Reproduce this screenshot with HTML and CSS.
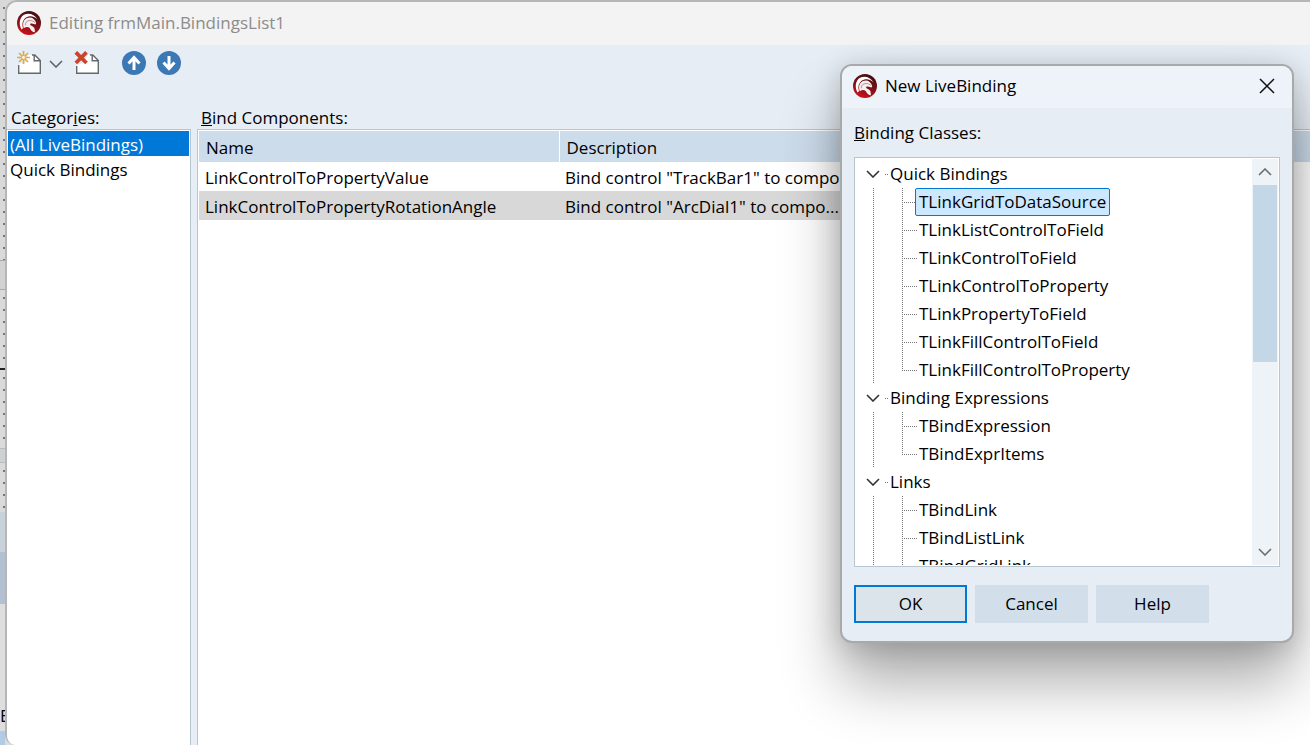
FILE: index.html
```html
<!DOCTYPE html>
<html lang="en">
<head>
    <meta charset="UTF-8">
    <meta name="viewport" content="width=device-width, initial-scale=1.0">
    <title>Editing frmMain.BindingsList1</title>
    <link rel="stylesheet" href="styles.css">
</head>
<body>
    <!--Shared logo-->
    <svg class="defs" width="0" height="0" aria-hidden="true">
        <defs>
            <linearGradient id="red" x1="0.8" y1="0" x2="0.4" y2="1">
                <stop offset="0" stop-color="#3a0c10"/>
                <stop offset="0.55" stop-color="#7d1218"/>
                <stop offset="1" stop-color="#cf1118"/>
            </linearGradient>
            <symbol id="helmet" viewBox="0 0 24 24">
                <circle cx="12" cy="12" r="12" fill="url(#red)"/>
                <path fill="#fff" d="M4.500 18.500C1.800 13.500 2 7 7 3.800C11.500 1.300 17.500 3 20.500 8.500C17 5 12.800 4.600 9.500 6.200C5.800 8.200 4.600 12.500 6 17.300Z"/>
                <path fill="#f4f0f0" d="M6.800 17.300C5.200 12.800 6.300 8.800 10 7C13.800 5.400 18 7.200 19.200 12L18.500 13.500L14.800 12.600C13.600 12.500 13 13 13.200 13.700C13.800 14.900 16 14.800 17.200 16.700C18 18.200 17.600 19.800 18 21.300C15.500 21 13.800 19.300 12.900 17.200C11 15.600 9 15.800 6.800 17.300Z"/>
                <path fill="none" stroke="#a86a6d" stroke-width="0.7" d="M8.300 14.300C8.200 11.200 10 9.500 13 9.500C15 9.500 16.800 10.200 18 11.600"/>
            </symbol>
        </defs>
    </svg>

    <div class="screen">
        <!--Designer showing behind the window-->
        <div class="designer" aria-hidden="true">
            <div class="strip dots top"></div>
            <div class="strip splitter"></div>
            <div class="strip dots mid"></div>
            <div class="strip line"></div>
            <div class="strip dots mid"></div>
            <div class="strip bar"></div>
            <div class="strip dots low"></div>
            <div class="strip tab"></div>
            <div class="strip tab-active"></div>
            <div class="strip tree-edge">E</div>
            <div class="strip status"></div>
        </div>

        <main class="window">
            <header class="titlebar">
                <svg class="logo"><use href="#helmet"/></svg>
                <h1>Editing frmMain.BindingsList1</h1>
            </header>

            <div class="toolbar">
                <button class="tool" aria-label="New binding">
                    <svg width="25" height="24" viewBox="0 0 25 24">
                        <path d="M2 13V22.300H23.300V10L17 4H11L9 11Z" fill="#fff"/>
                        <path d="M1.700 14V22.300H23.300V9.500L17.800 4H15M17.200 4.500V9.800H23" fill="none" stroke="#66696c" stroke-width="1.400"/>
                        <path d="M6.500 0V13M0 6.500H13M2 2L11 11M11 2L2 11" stroke="#e6a93f" stroke-width="1.700"/>
                        <circle cx="6.500" cy="6.500" r="1.400" fill="#fff"/>
                    </svg>
                </button>
                <button class="tool arrow" aria-label="More">
                    <svg width="14" height="10" viewBox="0 0 14 10"><path d="M1 3L7 9L13 3" fill="none" stroke="#606468" stroke-width="1.600"/></svg>
                </button>
                <button class="tool delete" aria-label="Delete binding">
                    <svg width="26" height="24" viewBox="0 0 26 24">
                        <path d="M3 14V22.300H24.300V10L18 4H14L10 12Z" fill="#fff"/>
                        <path d="M2.700 15V22.300H24.300V9.500L18.800 4H16M18.200 4.500V9.800H24" fill="none" stroke="#66696c" stroke-width="1.400"/>
                        <path d="M1.800 1.300L12.500 12M12.500 1.300L1.800 12" stroke="#c9452c" stroke-width="3.800"/>
                    </svg>
                </button>
                <button class="tool" aria-label="Move up">
                    <svg width="24" height="24" viewBox="0 0 24 24"><circle cx="12" cy="12" r="12" fill="#3c78b4"/><path d="M12 19V6.500M6.500 12.500L12 6.500L17.500 12.500" fill="none" stroke="#fff" stroke-width="3"/></svg>
                </button>
                <button class="tool" aria-label="Move down">
                    <svg width="24" height="24" viewBox="0 0 24 24"><circle cx="12" cy="12" r="12" fill="#3c78b4"/><path d="M12 5V17.500M6.500 11.500L12 17.500L17.500 11.500" fill="none" stroke="#fff" stroke-width="3"/></svg>
                </button>
            </div>

            <div class="panes">
                <section class="categories">
                    <h2 id="categories">Categor<u>i</u>es:</h2>
                    <ul class="listbox" aria-labelledby="categories">
                        <li><button class="item selected">(All LiveBindings)</button></li>
                        <li><button class="item">Quick Bindings</button></li>
                    </ul>
                </section>
                <section class="components">
                    <h2 id="components"><u>B</u>ind Components:</h2>
                    <div class="grid">
                        <table aria-labelledby="components">
                            <colgroup><col class="col-name"><col class="col-desc"><col></colgroup>
                            <thead>
                                <tr><th>Name</th><th>Description</th><th></th></tr>
                            </thead>
                            <tbody>
                                <tr><td>LinkControlToPropertyValue</td><td>Bind control "TrackBar1" to compo...</td><td></td></tr>
                                <tr class="current"><td>LinkControlToPropertyRotationAngle</td><td>Bind control "ArcDial1" to compo...</td><td></td></tr>
                            </tbody>
                        </table>
                    </div>
                </section>
            </div>
        </main>
    </div>

    <!--New binding dialog-->
    <div class="dialog" role="dialog" aria-labelledby="dialog-title">
        <header class="dialog-title">
            <svg class="logo"><use href="#helmet"/></svg>
            <h1 id="dialog-title">New LiveBinding</h1>
            <button class="close" aria-label="Close">
                <svg width="16" height="16" viewBox="0 0 16 16"><path d="M1 1L15 15M15 1L1 15" stroke="#111" stroke-width="1.500"/></svg>
            </button>
        </header>
        <div class="dialog-body">
            <h2 id="classes"><u>B</u>inding Classes:</h2>
            <div class="tree-box">
                <ul class="tree" aria-labelledby="classes">
                    <li>
                        <button class="group"><svg class="chevron" viewBox="0 0 14 8"><path d="M1 1L7 7L13 1"/></svg>Quick Bindings</button>
                        <ul class="children">
                            <li><button class="node selected">TLinkGridToDataSource</button></li>
                            <li><button class="node">TLinkListControlToField</button></li>
                            <li><button class="node">TLinkControlToField</button></li>
                            <li><button class="node">TLinkControlToProperty</button></li>
                            <li><button class="node">TLinkPropertyToField</button></li>
                            <li><button class="node">TLinkFillControlToField</button></li>
                            <li class="last"><button class="node">TLinkFillControlToProperty</button></li>
                        </ul>
                    </li>
                    <li>
                        <button class="group"><svg class="chevron" viewBox="0 0 14 8"><path d="M1 1L7 7L13 1"/></svg>Binding Expressions</button>
                        <ul class="children">
                            <li><button class="node">TBindExpression</button></li>
                            <li class="last"><button class="node">TBindExprItems</button></li>
                        </ul>
                    </li>
                    <li>
                        <button class="group"><svg class="chevron" viewBox="0 0 14 8"><path d="M1 1L7 7L13 1"/></svg>Links</button>
                        <ul class="children">
                            <li><button class="node">TBindLink</button></li>
                            <li><button class="node">TBindListLink</button></li>
                            <li><button class="node">TBindGridLink</button></li>
                        </ul>
                    </li>
                </ul>
                <div class="scrollbar">
                    <button class="scroll-btn" aria-label="Scroll up"><svg class="chevron" viewBox="0 0 14 8"><path d="M1 7L7 1L13 7"/></svg></button>
                    <div class="track"><div class="thumb"></div></div>
                    <button class="scroll-btn" aria-label="Scroll down"><svg class="chevron" viewBox="0 0 14 8"><path d="M1 1L7 7L13 1"/></svg></button>
                </div>
            </div>
            <div class="buttons">
                <button class="btn default">OK</button>
                <button class="btn">Cancel</button>
                <button class="btn">Help</button>
            </div>
        </div>
    </div>
</body>
</html>
```
FILE: styles.css
```css
*{
    box-sizing: border-box;
    margin: 0;
    padding: 0;
}
body{
    font-family: "Segoe UI", "Open Sans", "Noto Sans", sans-serif;
    font-size: 17px;
    line-height: 24px;
    color: #000;
    background: #b9b9b9;
    overflow: hidden;
}
ul{
    list-style: none;
}
button{
    font: inherit;
    color: inherit;
    background: none;
    border: none;
}
h1, h2{
    font-size: 17px;
    font-weight: normal;
}
.defs{
    position: absolute;
}
.screen{
    display: flex;
    height: 100vh;
    background: linear-gradient(#d8d8d8, #dcdcdc);
}

/*Slice of the form designer on the left*/
.designer{
    flex: none;
    width: 5px;
    display: flex;
    flex-direction: column;
}
.strip{
    flex: none;
    overflow: hidden;
}
.dots{
    background: radial-gradient(circle at 4px 8px, #777 1px, transparent 1px) 0 0 / 6px 12px;
}
.top{ height: 260px; }
.splitter{
    height: 30px;
    background: #d2d2d2;
    border-top: 1px solid #a9a9a9;
    border-bottom: 1px solid #a9a9a9;
}
.mid{ height: 78px; }
.line{
    height: 2px;
    background: #222;
}
.bar{
    height: 15px;
    background: #cdd2d2;
    border-top: 1px solid #bbb;
    border-bottom: 1px solid #bbb;
}
.low{ height: 49px; }
.tab{
    height: 40px;
    background: #c9d2da;
}
.tab-active{
    height: 52px;
    background: #b2c0d2;
}
.tree-edge{
    height: 127px;
    padding-top: 100px;
    background: #dedede;
}
.status{
    height: 14px;
    background: #b0cbe3;
}

/*Main window*/
.window{
    flex: 1;
    min-width: 0;
    display: flex;
    flex-direction: column;
    border: 2px solid #b4b6b8;
    border-right: none;
    border-bottom: none;
    border-radius: 12px 0 0 10px;
    background: #e6edf4;
    overflow: hidden;
}
.titlebar{
    display: flex;
    align-items: center;
    gap: 8px;
    height: 43px;
    padding: 0 10px 2px;
    background: #f3f3f3;
    color: #8c8c8c;
}
.logo{
    flex: none;
    width: 24px;
    height: 24px;
}
.toolbar{
    display: flex;
    align-items: center;
    gap: 11px;
    height: 36px;
    padding: 0 10px;
}
.tool{
    display: flex;
}
.tool.arrow{
    margin-left: -4px;
}
.tool.delete{
    margin-right: 11px;
}
.panes{
    flex: 1;
    display: flex;
    gap: 6px;
    margin-top: 26px;
}
.panes h2{
    padding: 0 4px;
    line-height: 22px;
}
.categories, .components{
    display: flex;
    flex-direction: column;
}
.categories{
    width: 184px;
}
.components{
    flex: 1;
    min-width: 0;
}
.listbox, .grid{
    flex: 1;
    padding: 1px;
    background: #fff;
    border: 1px solid #b8c6d0;
    border-bottom: none;
}
.listbox{
    border-left: none;
}
.grid{
    border-right: none;
    padding-right: 0;
}
.item{
    display: block;
    width: 100%;
    height: 25px;
    padding: 2px 2px 0;
    line-height: 23px;
    text-align: left;
}
.item.selected{
    background: #0078d7;
    color: #fff;
}
table{
    width: 100%;
    table-layout: fixed;
    border-collapse: collapse;
}
.col-name{ width: 360px; }
.col-desc{ width: 288px; }
th{
    height: 31px;
    padding: 2px 7px 0;
    font-weight: normal;
    text-align: left;
    background: #cddceb;
    border-right: 1px solid #fff;
}
th:last-child{
    border-right: none;
}
td{
    height: 29px;
    padding: 2px 6px 0;
    white-space: nowrap;
}
.current td{
    background: #d8d8d8;
}
.current td:last-child{
    background: none;
}

/*Dialog*/
.dialog{
    position: absolute;
    top: 64px;
    right: 16px;
    width: 454px;
    border: 2px solid #a7a9ab;
    border-radius: 12px;
    background: #e6edf4;
    box-shadow: 0 40px 60px rgba(0, 0, 0, 0.32), 0 4px 28px rgba(0, 0, 0, 0.18);
    overflow: hidden;
}
.dialog-title{
    display: flex;
    align-items: center;
    gap: 8px;
    height: 42px;
    padding: 0 17px 2px 11px;
    background: #eef3fa;
}
.close{
    display: flex;
    margin-left: auto;
}
.dialog-body{
    padding: 13px 12px 18px;
}
.tree-box{
    display: flex;
    height: 410px;
    margin-top: 12px;
    padding: 1px;
    background: #fff;
    border: 1px solid #b8c6d0;
}
.tree{
    flex: 1;
    padding: 1px 0;
    overflow: hidden;
}
.group{
    display: flex;
    align-items: center;
    gap: 10px;
    width: 100%;
    height: 28px;
    padding-left: 10px;
    background: repeating-linear-gradient(90deg, #777 0 1px, transparent 1px 2px) 29px 14px / 4px 1px no-repeat;
}
.chevron{
    width: 14px;
    height: 8px;
    fill: none;
    stroke: #333;
    stroke-width: 1.6;
}
/*dotted guide lines of the tree*/
.children{
    padding-left: 46px;
    background: repeating-linear-gradient(#777 0 1px, transparent 1px 2px) 17px 0 / 1px 100% no-repeat;
}
.children li{
    height: 28px;
    padding-left: 13px;
    background:
        repeating-linear-gradient(#777 0 1px, transparent 1px 2px) 0 0 / 1px 100% no-repeat,
        repeating-linear-gradient(90deg, #777 0 1px, transparent 1px 2px) 0 14px / 15px 1px no-repeat;
}
.children .last{
    background:
        repeating-linear-gradient(#777 0 1px, transparent 1px 2px) 0 0 / 1px 14px no-repeat,
        repeating-linear-gradient(90deg, #777 0 1px, transparent 1px 2px) 0 14px / 15px 1px no-repeat;
}
.node{
    height: 28px;
    padding: 0 3px;
    border: 1px solid transparent;
    border-radius: 2px;
}
.node.selected{
    background: #cce8ff;
    border-color: #0078d7;
}
.scrollbar{
    display: flex;
    flex-direction: column;
    width: 26px;
    background: #edf3f7;
}
.scroll-btn{
    display: flex;
    align-items: center;
    justify-content: center;
    height: 26px;
}
.scroll-btn .chevron{
    stroke: #6b6e71;
}
.track{
    flex: 1;
    padding: 0 1px;
}
.thumb{
    height: 177px;
    background: #c4d7e7;
}
.buttons{
    display: flex;
    gap: 8px;
    margin-top: 18px;
}
.btn{
    width: 113px;
    height: 38px;
    background: #d2dee9;
}
.btn.default{
    background: #dce4eb;
    border: 2px solid #0078d7;
}
```
